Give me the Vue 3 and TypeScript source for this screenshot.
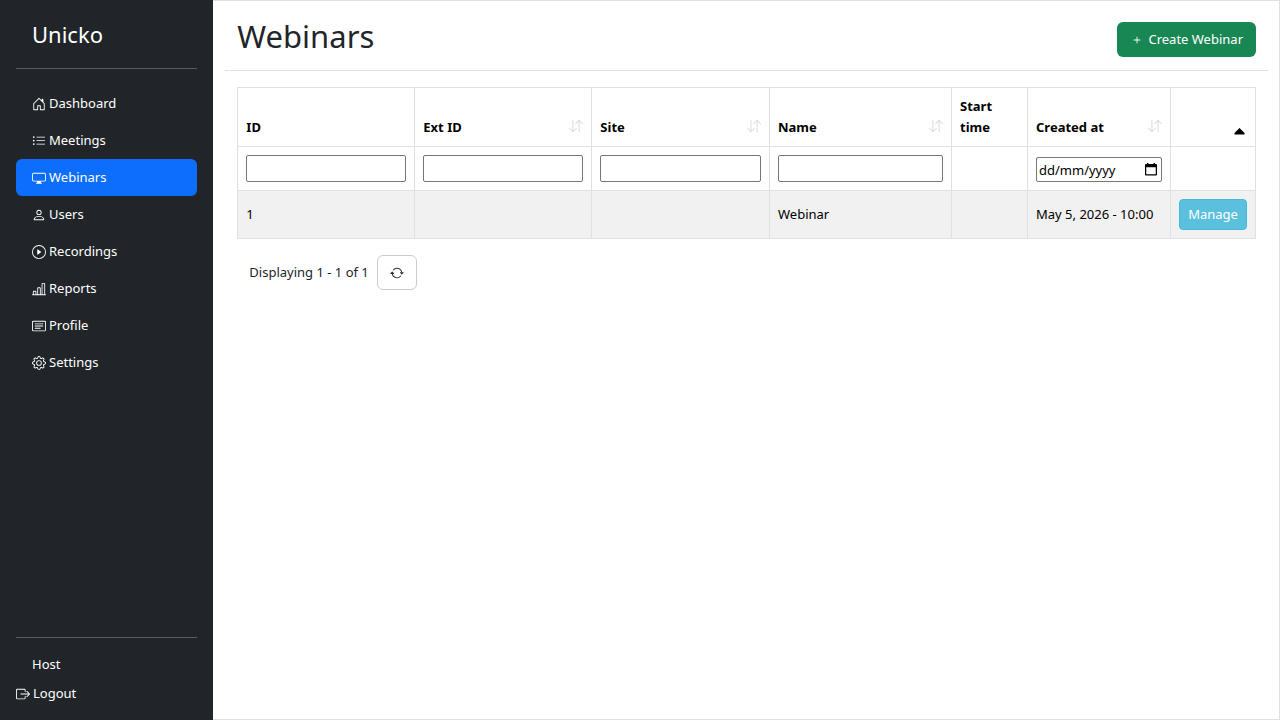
<script setup lang="ts">
import { ref } from 'vue'

interface NavItem {
  label: string
  icon: string
}

interface Column {
  key: string
  label: string
  sortable: boolean
  filter: 'text' | 'date' | 'none'
}

const icons: Record<string, string[]> = {
  house: [
    'M8.354 1.146a.5.5 0 0 0-.708 0l-6 6A.5.5 0 0 0 1.5 7.5v7a.5.5 0 0 0 .5.5h4.5a.5.5 0 0 0 .5-.5v-4h2v4a.5.5 0 0 0 .5.5H14a.5.5 0 0 0 .5-.5v-7a.5.5 0 0 0-.146-.354L13 5.793V2.5a.5.5 0 0 0-.5-.5h-1a.5.5 0 0 0-.5.5v1.293L8.354 1.146zM2.5 14V7.707l5.5-5.5 5.5 5.5V14H10v-4a.5.5 0 0 0-.5-.5h-3a.5.5 0 0 0-.5.5v4H2.5z',
  ],
  list: [
    'M5 11.5a.5.5 0 0 1 .5-.5h9a.5.5 0 0 1 0 1h-9a.5.5 0 0 1-.5-.5zm0-4a.5.5 0 0 1 .5-.5h9a.5.5 0 0 1 0 1h-9a.5.5 0 0 1-.5-.5zm0-4a.5.5 0 0 1 .5-.5h9a.5.5 0 0 1 0 1h-9a.5.5 0 0 1-.5-.5zm-3 1a1 1 0 1 0 0-2 1 1 0 0 0 0 2zm0 4a1 1 0 1 0 0-2 1 1 0 0 0 0 2zm0 4a1 1 0 1 0 0-2 1 1 0 0 0 0 2z',
  ],
  display: [
    'M0 4s0-2 2-2h12s2 0 2 2v6s0 2-2 2h-4c0 .667.083 1.167.25 1.5H11a.5.5 0 0 1 0 1H5a.5.5 0 0 1 0-1h.75c.167-.333.25-.833.25-1.5H2s-2 0-2-2V4zm1.398-.855a.758.758 0 0 0-.254.302A1.46 1.46 0 0 0 1 4.01V10c0 .325.078.502.145.602.07.105.17.188.302.254a1.464 1.464 0 0 0 .538.143L2.01 11H14c.325 0 .502-.078.602-.145a.758.758 0 0 0 .254-.302 1.464 1.464 0 0 0 .143-.538L15 9.99V4c0-.325-.078-.502-.145-.602a.757.757 0 0 0-.302-.254A1.46 1.46 0 0 0 13.99 3H2c-.325 0-.502.078-.602.145z',
  ],
  person: [
    'M8 8a3 3 0 1 0 0-6 3 3 0 0 0 0 6zm2-3a2 2 0 1 1-4 0 2 2 0 0 1 4 0zm4 8c0 1-1 1-1 1H3s-1 0-1-1 1-4 6-4 6 3 6 4zm-1-.004c-.001-.246-.154-.986-.832-1.664C11.516 10.68 10.289 10 8 10c-2.29 0-3.516.68-4.168 1.332-.678.678-.83 1.418-.832 1.664h10z',
  ],
  play: [
    'M8 15A7 7 0 1 1 8 1a7 7 0 0 1 0 14zm0 1A8 8 0 1 0 8 0a8 8 0 0 0 0 16z',
    'M6.271 5.055a.5.5 0 0 1 .52.038l3.5 2.5a.5.5 0 0 1 0 .814l-3.5 2.5A.5.5 0 0 1 6 10.5v-5a.5.5 0 0 1 .271-.445z',
  ],
  chart: [
    'M11 2a1 1 0 0 1 1-1h2a1 1 0 0 1 1 1v12h.5a.5.5 0 0 1 0 1H.5a.5.5 0 0 1 0-1H1v-3a1 1 0 0 1 1-1h2a1 1 0 0 1 1 1v3h1V7a1 1 0 0 1 1-1h2a1 1 0 0 1 1 1v7h1V2zm1 12h2V2h-2v12zm-3 0V7H7v7h2zm-5 0v-3H2v3h2z',
  ],
  card: [
    'M14.5 3a.5.5 0 0 1 .5.5v9a.5.5 0 0 1-.5.5h-13a.5.5 0 0 1-.5-.5v-9a.5.5 0 0 1 .5-.5h13zm-13-1A1.5 1.5 0 0 0 0 3.5v9A1.5 1.5 0 0 0 1.5 14h13a1.5 1.5 0 0 0 1.5-1.5v-9A1.5 1.5 0 0 0 14.5 2h-13z',
    'M3 5.5a.5.5 0 0 1 .5-.5h9a.5.5 0 0 1 0 1h-9a.5.5 0 0 1-.5-.5zM3 8a.5.5 0 0 1 .5-.5h9a.5.5 0 0 1 0 1h-9A.5.5 0 0 1 3 8zm0 2.5a.5.5 0 0 1 .5-.5h6a.5.5 0 0 1 0 1h-6a.5.5 0 0 1-.5-.5z',
  ],
  gear: [
    'M8 4.754a3.246 3.246 0 1 0 0 6.492 3.246 3.246 0 0 0 0-6.492zM5.754 8a2.246 2.246 0 1 1 4.492 0 2.246 2.246 0 0 1-4.492 0z',
    'M9.796 1.343c-.527-1.79-3.065-1.79-3.592 0l-.094.319a.873.873 0 0 1-1.255.52l-.292-.16c-1.64-.892-3.433.902-2.54 2.541l.159.292a.873.873 0 0 1-.52 1.255l-.319.094c-1.79.527-1.79 3.065 0 3.592l.319.094a.873.873 0 0 1 .52 1.255l-.16.292c-.892 1.64.901 3.434 2.541 2.54l.292-.159a.873.873 0 0 1 1.255.52l.094.319c.527 1.79 3.065 1.79 3.592 0l.094-.319a.873.873 0 0 1 1.255-.52l.292.16c1.64.893 3.434-.902 2.54-2.541l-.159-.292a.873.873 0 0 1 .52-1.255l.319-.094c1.79-.527 1.79-3.065 0-3.592l-.319-.094a.873.873 0 0 1-.52-1.255l.16-.292c.893-1.64-.902-3.433-2.541-2.54l-.292.159a.873.873 0 0 1-1.255-.52l-.094-.319zm-2.633.283c.246-.835 1.428-.835 1.674 0l.094.319a1.873 1.873 0 0 0 2.693 1.115l.291-.16c.764-.415 1.6.42 1.184 1.185l-.159.292a1.873 1.873 0 0 0 1.116 2.692l.318.094c.835.246.835 1.428 0 1.674l-.319.094a1.873 1.873 0 0 0-1.115 2.693l.16.291c.415.764-.42 1.6-1.185 1.184l-.291-.159a1.873 1.873 0 0 0-2.693 1.116l-.094.318c-.246.835-1.428.835-1.674 0l-.094-.319a1.873 1.873 0 0 0-2.692-1.115l-.292.16c-.764.415-1.6-.42-1.184-1.185l.159-.291A1.873 1.873 0 0 0 1.945 8.93l-.319-.094c-.835-.246-.835-1.428 0-1.674l.319-.094A1.873 1.873 0 0 0 3.06 4.377l-.16-.292c-.415-.764.42-1.6 1.185-1.184l.292.159a1.873 1.873 0 0 0 2.692-1.115l.094-.319z',
  ],
  logout: [
    'M10 12.5a.5.5 0 0 1-.5.5h-8a.5.5 0 0 1-.5-.5v-9a.5.5 0 0 1 .5-.5h8a.5.5 0 0 1 .5.5v2a.5.5 0 0 0 1 0v-2A1.5 1.5 0 0 0 9.5 2h-8A1.5 1.5 0 0 0 0 3.5v9A1.5 1.5 0 0 0 1.5 14h8a1.5 1.5 0 0 0 1.5-1.5v-2a.5.5 0 0 0-1 0v2z',
    'M15.854 8.354a.5.5 0 0 0 0-.708l-3-3a.5.5 0 0 0-.708.708L14.293 7.5H5.5a.5.5 0 0 0 0 1h8.793l-2.147 2.146a.5.5 0 0 0 .708.708l3-3z',
  ],
  plus: ['M8 4a.5.5 0 0 1 .5.5v3h3a.5.5 0 0 1 0 1h-3v3a.5.5 0 0 1-1 0v-3h-3a.5.5 0 0 1 0-1h3v-3A.5.5 0 0 1 8 4z'],
  repeat: [
    'M11.534 7h3.932a.25.25 0 0 1 .192.41l-1.966 2.36a.25.25 0 0 1-.384 0l-1.966-2.36a.25.25 0 0 1 .192-.41zm-11 2h3.932a.25.25 0 0 0 .192-.41L2.692 6.23a.25.25 0 0 0-.384 0L.342 8.59A.25.25 0 0 0 .534 9z',
    'M8 3c-1.552 0-2.94.707-3.857 1.818a.5.5 0 1 1-.771-.636A6.002 6.002 0 0 1 13.917 7H12.9A5.002 5.002 0 0 0 8 3zM3.1 9a5.002 5.002 0 0 0 8.757 2.182.5.5 0 1 1 .771.636A6.002 6.002 0 0 1 2.083 9H3.1z',
  ],
  sort: [
    'M11.5 15a.5.5 0 0 0 .5-.5V2.707l3.146 3.147a.5.5 0 0 0 .708-.708l-4-4a.5.5 0 0 0-.708 0l-4 4a.5.5 0 1 0 .708.708L11 2.707V14.5a.5.5 0 0 0 .5.5zm-7-14a.5.5 0 0 1 .5.5v11.793l3.146-3.147a.5.5 0 0 1 .708.708l-4 4a.5.5 0 0 1-.708 0l-4-4a.5.5 0 0 1 .708-.708L4 13.293V1.5a.5.5 0 0 1 .5-.5z',
  ],
}

const navItems: NavItem[] = [
  { label: 'Dashboard', icon: 'house' },
  { label: 'Meetings', icon: 'list' },
  { label: 'Webinars', icon: 'display' },
  { label: 'Users', icon: 'person' },
  { label: 'Recordings', icon: 'play' },
  { label: 'Reports', icon: 'chart' },
  { label: 'Profile', icon: 'card' },
  { label: 'Settings', icon: 'gear' },
]

const columns: Column[] = [
  { key: 'id', label: 'ID', sortable: false, filter: 'text' },
  { key: 'ext', label: 'Ext ID', sortable: true, filter: 'text' },
  { key: 'site', label: 'Site', sortable: true, filter: 'text' },
  { key: 'name', label: 'Name', sortable: true, filter: 'text' },
  { key: 'start', label: 'Start time', sortable: false, filter: 'none' },
  { key: 'created', label: 'Created at', sortable: true, filter: 'date' },
]

const rows: Record<string, string>[] = [
  { id: '1', ext: '', site: '', name: 'Webinar', start: '', created: 'May 5, 2026 - 10:00' },
]

const active = ref('Webinars')
const filters = ref<Record<string, string>>({ id: '', ext: '', site: '', name: '', created: '' })
</script>

<template>
  <div class="layout">
    <aside class="sidebar">
      <a class="brand" href="#">Unicko</a>
      <hr class="rule" />
      <nav class="nav">
        <a
          v-for="item in navItems"
          :key="item.label"
          href="#"
          class="nav-link"
          :class="{ active: item.label === active }"
          @click.prevent="active = item.label"
        >
          <svg class="icon" viewBox="0 0 16 16" aria-hidden="true">
            <path v-for="d in icons[item.icon]" :key="d" :d="d" />
          </svg>
          <span>{{ item.label }}</span>
        </a>
      </nav>
      <hr class="rule" />
      <div class="account">
        <div class="user">Host</div>
        <a class="logout" href="#">
          <svg class="icon" viewBox="0 0 16 16" aria-hidden="true">
            <path v-for="d in icons.logout" :key="d" :d="d" />
          </svg>
          <span>Logout</span>
        </a>
      </div>
    </aside>

    <main class="main">
      <header class="header">
        <h1>Webinars</h1>
        <button type="button" class="create">
          <svg class="icon" viewBox="0 0 16 16" aria-hidden="true">
            <path v-for="d in icons.plus" :key="d" :d="d" />
          </svg>
          <span>Create Webinar</span>
        </button>
      </header>

      <section class="content">
        <table class="grid">
          <colgroup>
            <col v-for="c in columns" :key="c.key" :class="'col-' + c.key" />
            <col class="col-actions" />
          </colgroup>
          <thead>
            <tr>
              <th v-for="c in columns" :key="c.key" scope="col">
                <div class="title">
                  <span :id="'label-' + c.key">{{ c.label }}</span>
                  <button v-if="c.sortable" type="button" class="sort" :aria-label="'Sort by ' + c.label">
                    <svg class="icon" viewBox="0 0 16 16" aria-hidden="true">
                      <path v-for="d in icons.sort" :key="d" :d="d" />
                    </svg>
                  </button>
                </div>
              </th>
              <th scope="col" aria-label="Actions">
                <div class="title end">
                  <button type="button" class="toggle" aria-label="Toggle filters">
                    <svg class="caret" viewBox="0 0 11 7" aria-hidden="true">
                      <path d="M5.5 0 10.5 5V6.5H.5V5z" />
                    </svg>
                  </button>
                </div>
              </th>
            </tr>
            <tr>
              <td v-for="c in columns" :key="c.key">
                <input
                  v-if="c.filter === 'text'"
                  v-model="filters[c.key]"
                  type="text"
                  :aria-labelledby="'label-' + c.key"
                />
                <div v-else-if="c.filter === 'date'" class="date-field">
                  <input
                    v-model="filters[c.key]"
                    type="text"
                    class="date"
                    placeholder="dd/mm/yyyy"
                    :aria-labelledby="'label-' + c.key"
                  />
                  <button type="button" class="picker" aria-label="Open calendar">
                    <svg class="calendar" viewBox="0 0 12 13" aria-hidden="true">
                      <path
                        fill-rule="evenodd"
                        d="M2 0h1.5v1h5V0H10v1h1a1 1 0 0 1 1 1v9.500a1 1 0 0 1-1 1H1a1 1 0 0 1-1-1V2a1 1 0 0 1 1-1h1zM1.250 4.200v7h9.500v-7z"
                      />
                    </svg>
                  </button>
                </div>
              </td>
              <td></td>
            </tr>
          </thead>
          <tbody>
            <tr v-for="row in rows" :key="row.id">
              <td v-for="c in columns" :key="c.key">{{ row[c.key] }}</td>
              <td><button type="button" class="manage">Manage</button></td>
            </tr>
          </tbody>
        </table>

        <footer class="summary">
          <span>Displaying 1 - 1 of 1</span>
          <button type="button" class="refresh" aria-label="Refresh">
            <svg class="icon" viewBox="0 0 16 16" aria-hidden="true">
              <path v-for="d in icons.repeat" :key="d" :d="d" />
            </svg>
          </button>
        </footer>
      </section>
    </main>
  </div>
</template>

<style scoped>
.layout,
.layout * {
  box-sizing: border-box;
}

.layout {
  display: flex;
  min-height: 100vh;
  background: #fff;
  color: #212529;
  font-family: "Noto Sans", "Open Sans", "Liberation Sans", sans-serif;
  font-size: 13px;
  line-height: 21px;
}

button,
input {
  font: inherit;
}

button {
  cursor: pointer;
}

.icon {
  width: 14px;
  height: 14px;
  flex: none;
  fill: currentColor;
}

.sidebar {
  display: flex;
  flex-direction: column;
  flex: none;
  width: calc(100% / 6);
  padding: 16px;
  background: #212529;
  color: #fff;
}

.sidebar a {
  color: #fff;
  text-decoration: none;
}

.brand {
  padding: 0 16px;
  font-size: 22px;
  line-height: 36px;
}

.rule {
  width: 100%;
  height: 1px;
  margin: 16px 0;
  border: 0;
  background: #595c5f;
}

.nav {
  display: flex;
  flex: 1;
  flex-direction: column;
}

.nav-link {
  display: flex;
  align-items: center;
  gap: 3px;
  padding: 8px 16px;
  border-radius: 6px;
}

.nav-link.active {
  background: #0d6efd;
}

.user {
  padding: 0 16px;
}

.logout {
  display: flex;
  align-items: center;
  gap: 3px;
  margin-top: 8px;
}

.main {
  flex: 1;
  min-width: 0;
  padding: 0 11px 0 12px;
  border: 1px solid #dee2e6;
  border-left: 0;
}

.header {
  display: flex;
  align-items: center;
  justify-content: space-between;
  height: 70px;
  padding: 8px 12px 0;
  border-bottom: 1px solid #dee2e6;
}

h1 {
  margin: 0 0 8px;
  font-size: 31px;
  font-weight: 400;
  line-height: 38px;
}

.create {
  display: flex;
  align-items: center;
  gap: 4px;
  padding: 7px 13px;
  border: 0;
  border-radius: 6px;
  background: #198754;
  color: #fff;
}

.content {
  padding: 16px 12px;
}

.grid {
  width: 100%;
  table-layout: fixed;
  border-collapse: collapse;
}

.col-id,
.col-ext {
  width: 177px;
}

.col-name {
  width: 182px;
}

.col-start {
  width: 76px;
}

.col-created {
  width: 143px;
}

.col-actions {
  width: 85px;
}

th,
td {
  padding: 8px;
  border: 1px solid #dee2e6;
  color: #000;
  text-align: left;
  vertical-align: bottom;
}

.title {
  display: flex;
  align-items: flex-end;
  justify-content: space-between;
}

/* Multi-word titles may wrap onto a second line in the narrow column */
th:nth-child(5) .title {
  width: min-content;
}

.title.end {
  justify-content: flex-end;
}

.sort,
.toggle {
  display: flex;
  padding: 0;
  border: 0;
  background: none;
  color: #000;
}

.sort {
  padding-bottom: 5px;
  opacity: 0.15;
}

.toggle {
  padding: 0 2px 3px 0;
}

.caret {
  width: 11px;
  height: 7px;
}

input {
  display: block;
  width: 100%;
  height: 27px;
  padding: 1px 2px;
  border: 1px solid #767676;
  border-radius: 2px;
  background: #fff;
  color: #000;
}

input::placeholder {
  color: #000;
  opacity: 1;
}

.date-field {
  position: relative;
}

input.date {
  height: 25px;
  padding-right: 24px;
}

.picker {
  position: absolute;
  top: 0;
  right: 0;
  bottom: 0;
  display: flex;
  align-items: center;
  padding: 0 5px;
  border: 0;
  background: none;
  color: #000;
}

.calendar {
  width: 12px;
  height: 13px;
  fill: currentColor;
}

tbody td {
  background: #f1f1f1;
  vertical-align: middle;
}

.manage {
  display: block;
  width: 100%;
  padding: 4px 0;
  border: 1px solid #46b8da;
  border-radius: 4px;
  background: #5bc0de;
  color: #fff;
}

.summary {
  display: flex;
  align-items: center;
  gap: 8px;
  margin-top: 16px;
  padding-left: 12px;
}

.refresh {
  display: flex;
  align-items: center;
  height: 35px;
  padding: 0 12px;
  border: 1px solid #ccc;
  border-radius: 6px;
  background: #fff;
  color: #212529;
}
</style>
